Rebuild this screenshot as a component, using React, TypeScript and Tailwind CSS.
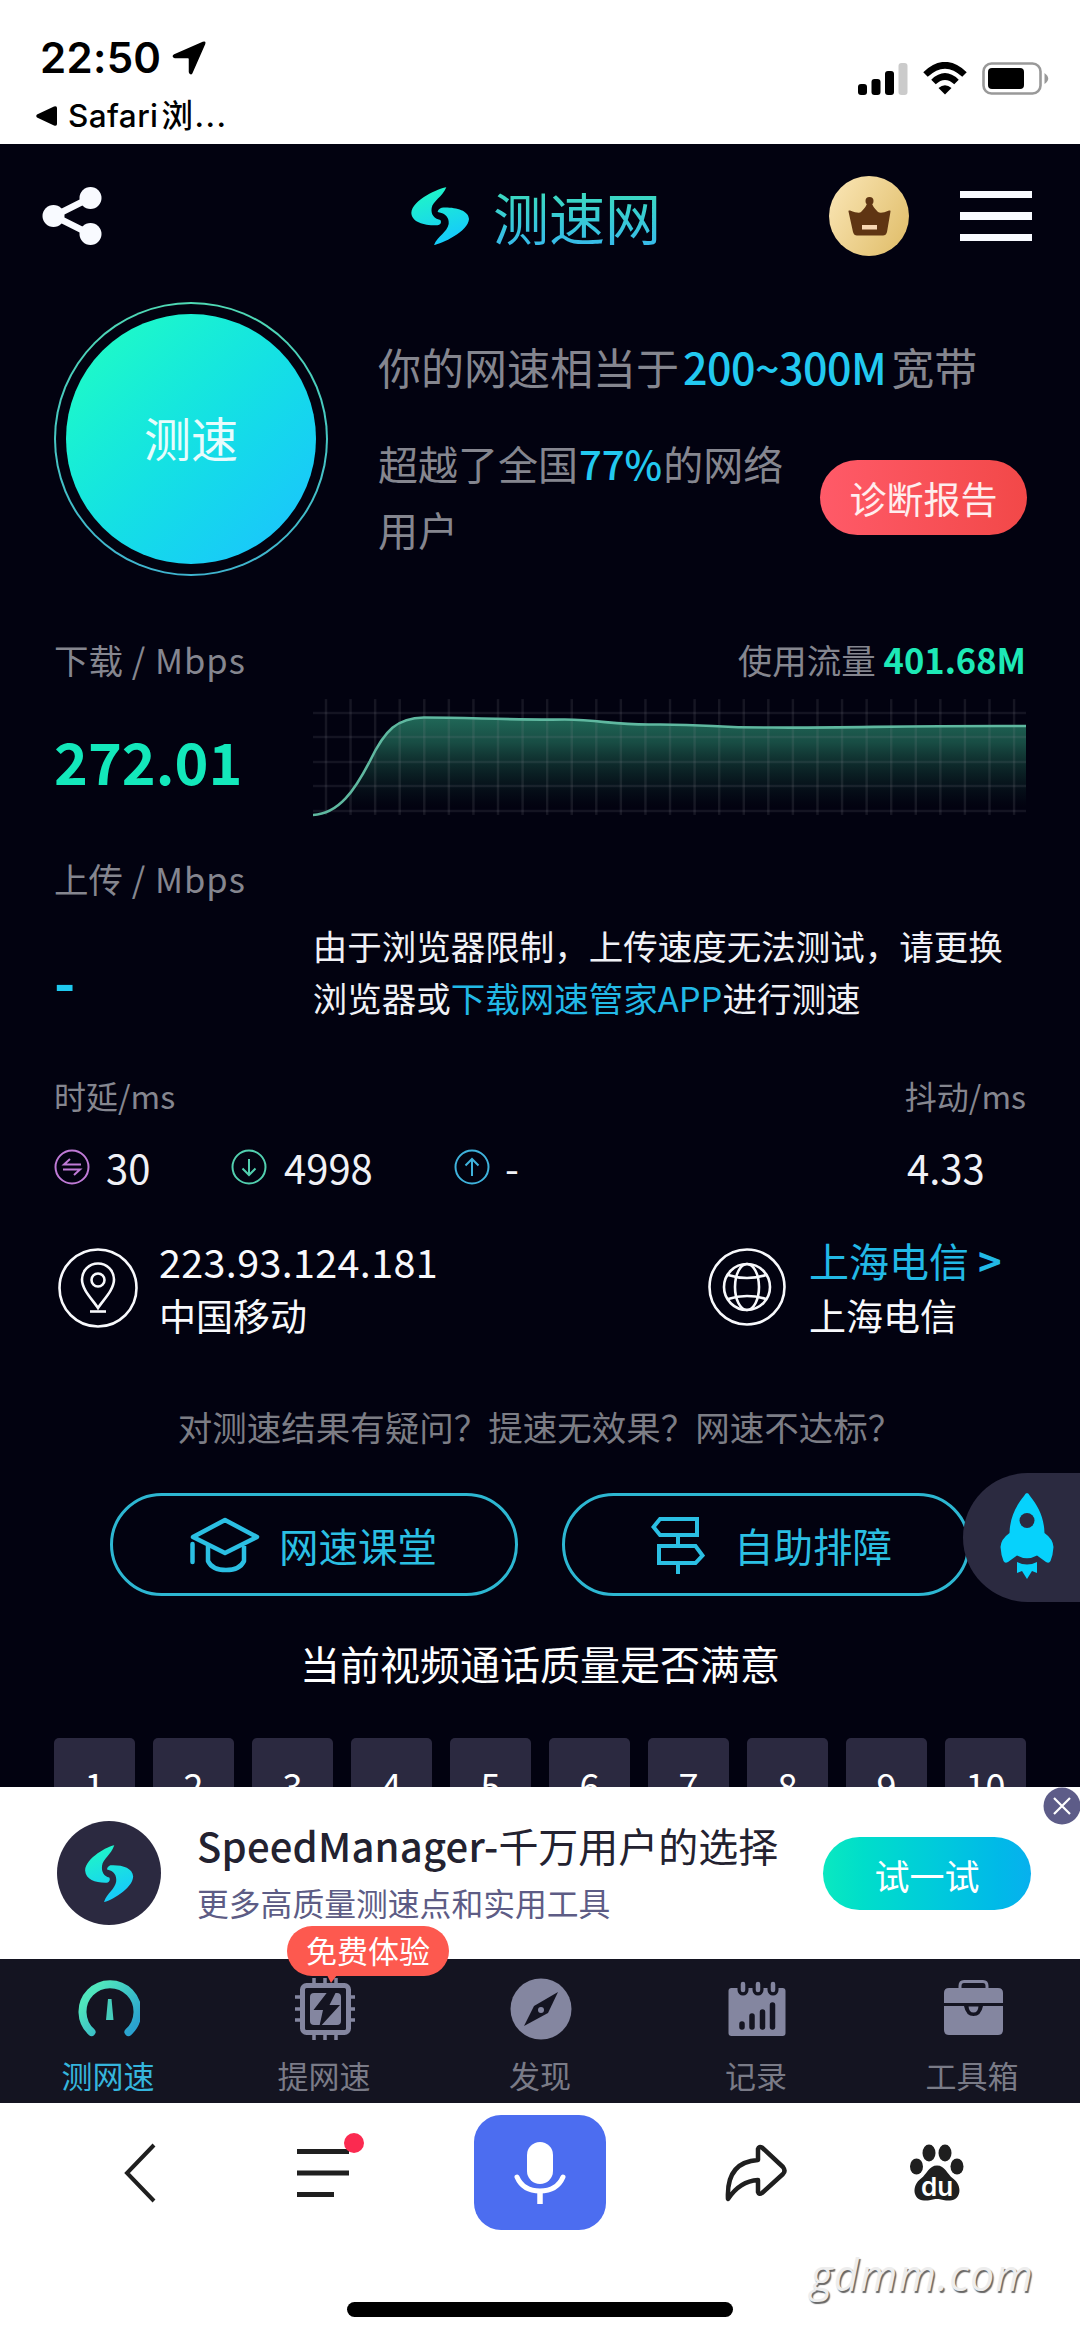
import { useId, type ReactNode } from "react";

const ratings = [1, 2, 3, 4, 5, 6, 7, 8, 9, 10];
const gridX = Array.from({ length: 29 }, (_, i) => 13 + i * 24.6);
const gridY = [18, 42, 67, 91, 116];

const curve =
  "M0 120 C26 119 42 95 57 66 C72 35 84 23 111 22.5 C160 22.5 190 25 252 24.5 C290 25 300 30 340 29.5 C400 29 400 33 460 32.5 C540 33 590 30.5 714 31";

function LogoMark({ className }: { className: string }) {
  const id = useId();
  return (
    <svg viewBox="30 64 180 180" preserveAspectRatio="none" className={className}>
      <defs>
        <linearGradient id={id} x1="0" y1="64" x2="60" y2="244" gradientUnits="userSpaceOnUse">
          <stop offset="0.2" stopColor="#1ff5c8" />
          <stop offset="1" stopColor="#16cdf8" />
        </linearGradient>
      </defs>
      <path
        fill={`url(#${id})`}
        d="M139 68C118 70 36 106 34 145C36 174 74 183 112 182C123 180 125 172 121 166C102 162 92 149 95 130C98 110 128 96 139 68Z"
      />
      <path
        fill={`url(#${id})`}
        d="M102 241C124 238 205 201 207 163C205 136 165 127 125 129C118 131 113 136 113 142C138 146 148 160 146 178C142 202 113 214 102 241Z"
      />
    </svg>
  );
}

function StatusBar() {
  return (
    <div className="flex h-[144px] shrink-0 justify-between bg-white pl-[36px] pr-[31px] text-black">
      <div className="flex flex-col pt-[37px]">
        <div className="flex items-center pl-[4px]">
          <span className="font-[Inter,sans-serif] text-[42px] font-semibold leading-[42px] tracking-[0.3px]">22:50</span>
          <svg viewBox="0 0 34 34" className="ml-[11px] h-[34px] w-[34px]">
            <path d="M31 1.5Q33.500 .5 32.500 3L20 31.500Q18.500 34 17.500 31V18Q17.500 16.500 16 16.500H3Q0 15.500 2.500 14Z" stroke="#000" strokeWidth="1.5" />
          </svg>
        </div>
        <div className="mt-[17px] flex items-center">
          <svg viewBox="0 0 22 20" className="h-[20px] w-[22px]">
            <path d="M1 8.500Q-.5 10 1 11.500L18 19.500Q21 20.500 21 18V2Q21-.5 18 .5Z" />
          </svg>
          <span className="ml-[10px] font-[Inter,'Noto_Sans_CJK_SC',sans-serif] text-[31.5px] font-medium leading-[40px] tracking-[0.4px]">
            Safari<span className="ml-[3px] tracking-[1.5px]">浏...</span>
          </span>
        </div>
      </div>
      <div className="mt-[62px] flex h-[33px] items-end gap-[15px] self-start">
        <svg viewBox="0 0 50 32" className="h-[32px] w-[50px]">
          <rect x="0" y="21" width="9" height="11" rx="3" />
          <rect x="13.500" y="16" width="9" height="16" rx="3" />
          <rect x="27" y="8" width="9" height="24" rx="3" />
          <rect x="40.500" y="0" width="9" height="32" rx="3" fill="#cbcbcb" />
        </svg>
        <svg viewBox="0 0 44 32" className="h-[33px] w-[44px]" fill="none" stroke="#000">
          <path d="M2.500 12Q22-6.500 41.500 12" strokeWidth="6.500" />
          <path d="M10.500 19.500Q22 8.500 33.500 19.500" strokeWidth="6.500" />
          <path d="M15.500 25.500Q22 20 28.500 25.500L22 32Z" fill="#000" stroke="none" />
        </svg>
        <svg viewBox="0 0 67 33" className="h-[33px] w-[67px]">
          <rect x="1.500" y="1.500" width="57" height="30" rx="8" fill="none" stroke="#999" strokeWidth="2.600" />
          <rect x="6" y="6" width="36" height="21" rx="4" />
          <path d="M62.500 11Q70 16.500 62.500 22Z" fill="#999" />
        </svg>
      </div>
    </div>
  );
}

function Header() {
  return (
    <div className="flex h-[144px] items-center pl-[42px]">
      <svg viewBox="0 0 60 60" className="h-[60px] w-[60px] shrink-0" fill="#f8faff">
        <path d="M48 12L12 30L48 48" fill="none" stroke="#f8faff" strokeWidth="6.500" />
        <circle cx="11.500" cy="30" r="11" />
        <circle cx="48.500" cy="12" r="11" />
        <circle cx="48.500" cy="48" r="11" />
      </svg>
      <LogoMark className="ml-[308px] h-[60px] w-[60px] shrink-0" />
      <span className="ml-[23px] w-[168px] shrink-0 whitespace-nowrap bg-gradient-to-b from-[#3fe0b4] to-[#38b6ee] bg-clip-text text-[56px] leading-[72px] text-transparent">
        测速网
      </span>
      <svg viewBox="0 0 80 80" className="ml-[168px] h-[80px] w-[80px] shrink-0">
        <defs>
          <linearGradient id="gold" x1="0" y1="0" x2="1" y2="0.6">
            <stop offset="0" stopColor="#fbe7b8" />
            <stop offset="1" stopColor="#e3c272" />
          </linearGradient>
        </defs>
        <circle cx="40" cy="40" r="40" fill="url(#gold)" />
        <circle cx="40.500" cy="25" r="4" fill="#5f3513" />
        <path
          d="M19.500 35.500Q19 34 21 34.500Q30 38 32 36Q38 30 38.500 26H42.500Q43 30 49 36Q52 38 60 34.500Q62 34 61.500 35.500L58 56Q57 59.500 54 59.500H28Q25 59.500 24 56Z"
          fill="#5f3513"
        />
        <rect x="33" y="49" width="15" height="4.500" fill="#f7d7b3" />
      </svg>
      <div className="ml-[51px] flex shrink-0 flex-col gap-[14px]">
        <span className="h-[7.5px] w-[72px] bg-[#f8faff]" />
        <span className="h-[7.5px] w-[72px] bg-[#f8faff]" />
        <span className="h-[7.5px] w-[72px] bg-[#f8faff]" />
      </div>
    </div>
  );
}

function Hero() {
  return (
    <div className="mt-[14px] flex h-[274px] pl-[54px]">
      <div className="h-[274px] w-[274px] shrink-0 rounded-full bg-gradient-to-b from-[#4fd9b4] to-[#3fb4cf] p-[2px]">
        <div className="flex h-full w-full items-center justify-center rounded-full bg-[#020210]">
          <button className="h-[250px] w-[250px] rounded-full bg-gradient-to-br from-[#1df7cb] from-15% to-[#1bc6fb] to-90% pb-[3px] text-[47px] text-white/90">
            测速
          </button>
        </div>
      </div>
      <div className="ml-[50px] flex flex-col whitespace-nowrap text-[#85868f]">
        <p className="mt-[34px] text-[43px] leading-[60px]">
          你的网速相当于
          <span className="pl-[4px] pr-[5px] font-medium tracking-[-0.5px] text-[#22c9f0]">200~300M</span>
          宽带
        </p>
        <div className="mt-[34px] flex">
          <p className="mr-[21px] w-[421px] whitespace-normal text-[40px] leading-[66px]">
            超越了全国<span className="px-[1px] font-medium text-[#22c9f0]">77%</span>的网络用户
          </p>
          <button className="mt-[30px] h-[75px] w-[207px] rounded-full bg-gradient-to-r from-[#ff5a68] to-[#f24848] pt-[2px] text-[37px] text-white/90">
            诊断报告
          </button>
        </div>
      </div>
    </div>
  );
}

function SpeedChart() {
  return (
    <svg viewBox="0 0 714 124" className="h-[124px] w-[714px]">
      <defs>
        <linearGradient id="area" x1="0" y1="20" x2="0" y2="112" gradientUnits="userSpaceOnUse">
          <stop offset="0" stopColor="#216b5a" />
          <stop offset="0.3" stopColor="#1c5a4d" stopOpacity="0.85" />
          <stop offset="1" stopColor="#0d2c29" stopOpacity="0" />
        </linearGradient>
      </defs>
      <path d={`${curve} V120 H0Z`} fill="url(#area)" />
      {gridX.map((x) => (
        <path key={x} d={`M${x} 4V120`} stroke="#8a8a96" strokeOpacity="0.15" strokeWidth="2.500" />
      ))}
      {gridY.map((y) => (
        <path key={y} d={`M0 ${y}H714`} stroke="#8a8a96" strokeOpacity="0.14" strokeWidth="2.500" />
      ))}
      <path d={curve} fill="none" stroke="#5fb8a0" strokeWidth="2.600" />
    </svg>
  );
}

function Speeds() {
  return (
    <div className="flex flex-col px-[54px] text-[34.5px]">
      <div className="mt-[63px] flex justify-between leading-[40px] text-[#85868f]">
        <span>
          下载<span className="tracking-[1px]"> / Mbps</span>
        </span>
        <span>
          使用流量 <b className="text-[#1de9b6]">401.68M</b>
        </span>
      </div>
      <div className="mt-[16px] flex items-center">
        <span className="mt-[5px] w-[259px] text-[57.5px] font-bold leading-[60px] text-[#13e8bb]">272.01</span>
        <SpeedChart />
      </div>
      <div className="mt-[39px] leading-[40px] text-[#85868f]">
        上传<span className="tracking-[1px]"> / Mbps</span>
      </div>
      <div className="mt-[21px] flex items-center">
        <span className="mt-4 w-[259px] text-[57.5px] font-bold leading-[60px] text-[#1fc9ef]">-</span>
        <p className="w-[714px] leading-[52px] text-[#f0f1f6]">
          由于浏览器限制，上传速度无法测试，请更换
          <br />
          浏览器或<a className="text-[#22b9e6]">下载网速管家APP</a>进行测速
        </p>
      </div>
    </div>
  );
}

function RingIcon({ color, children }: { color: string; children: ReactNode }) {
  return (
    <svg viewBox="0 0 36 36" className="h-[36px] w-[36px]" fill="none" stroke={color} strokeWidth="2">
      <circle cx="18" cy="18" r="16.500" />
      {children}
    </svg>
  );
}

function Latency() {
  return (
    <div className="flex flex-col px-[54px]">
      <div className="mt-[52px] flex justify-between text-[32px] leading-[40px] text-[#85868f]">
        <span>时延/ms</span>
        <span>抖动/ms</span>
      </div>
      <div className="mt-[32px] flex h-[40px] items-center text-[40px] leading-[40px] text-[#f0f1f6]">
        <div className="flex w-[177px] items-center gap-[16px]">
          <RingIcon color="#bf7ad6">
            <path d="M27 15.500H10L16 10M9 20.500H26L20 26" />
          </RingIcon>
          30
        </div>
        <div className="flex w-[223px] items-center gap-[17px]">
          <RingIcon color="#52cfaf">
            <path d="M18 10V26M11.500 19.500L18 26L24.500 19.500" />
          </RingIcon>
          4998
        </div>
        <div className="flex w-[453px] items-center gap-[15px]">
          <RingIcon color="#3fb2dc">
            <path d="M18 27V10M11.500 16.500L18 10L24.500 16.500" />
          </RingIcon>
          -
        </div>
        <span>4.33</span>
      </div>
    </div>
  );
}

function Network() {
  return (
    <div className="mt-[46px] flex items-center whitespace-nowrap px-[58px] text-[#f8f9fc]">
      <svg viewBox="0 0 80 80" className="h-[80px] w-[80px] shrink-0" fill="none" stroke="#f8f9fc" strokeWidth="2.600">
        <circle cx="40" cy="40" r="38.500" />
        <path d="M40 60C35 52 24 42 24 31.500A16 16 0 0 1 56 31.500C56 42 45 52 40 60Z" />
        <circle cx="40" cy="32" r="6.500" />
        <path d="M32 63.500H48" />
      </svg>
      <div className="ml-[21px] flex w-[548px] flex-col leading-[55px]">
        <span className="text-[39.5px] tracking-[0.35px]">223.93.124.181</span>
        <span className="text-[37px]">中国移动</span>
      </div>
      <svg viewBox="0 0 80 80" className="h-[80px] w-[80px] shrink-0" fill="none" stroke="#f8f9fc" strokeWidth="2.600">
        <circle cx="40" cy="39" r="37.500" />
        <circle cx="40" cy="39" r="23" />
        <ellipse cx="40" cy="39" rx="12" ry="23" />
        <path d="M21 27Q40 33 59 27M21 51Q40 45 59 51" />
      </svg>
      <div className="ml-[22px] flex flex-col leading-[55px]">
        <span className="text-[40px] text-[#22b9e6]">
          上海电信 <b>&gt;</b>
        </span>
        <span className="text-[37px]">上海电信</span>
      </div>
    </div>
  );
}

function HelpLinks() {
  return (
    <>
      <p className="mt-[63px] whitespace-nowrap text-center text-[34.5px] leading-[40px] text-[#7c7d85]">
        对测速结果有疑问？提速无效果？网速不达标？
      </p>
      <div className="mt-[47px] flex gap-[44px] pl-[110px] text-[39.5px] text-[#2bbfe3]">
        <button className="flex h-[103px] w-[408px] items-center rounded-full border-[3px] border-[#2db7d2] pl-[77px]">
          <svg viewBox="0 0 70 56" className="h-[56px] w-[70px]" fill="none" stroke="currentColor" strokeWidth="4.500" strokeLinejoin="round">
            <path d="M35 3L67 20L35 36L3 20Z" />
            <path d="M18 29V44Q22 53 36 53Q50 53 54 44V29" />
            <path d="M2.500 27V45" strokeLinecap="round" />
          </svg>
          <span className="ml-[19px]">网速课堂</span>
        </button>
        <button className="flex h-[103px] w-[408px] items-center rounded-full border-[3px] border-[#2db7d2] pl-[86px]">
          <svg viewBox="0 0 54 58" className="h-[58px] w-[54px]" fill="none" stroke="currentColor" strokeWidth="4">
            <path d="M9 3H46V19H9L2.500 11Z" />
            <path d="M8 30H44.500L51.500 39.500L44.500 47H8Z" />
            <path d="M27 19V30M27 47V58" />
          </svg>
          <span className="ml-[29px]">自助排障</span>
        </button>
      </div>
    </>
  );
}

function RocketTab() {
  return (
    <div className="absolute right-0 top-[1329px] h-[129px] w-[117px] rounded-l-full bg-[#2b2a40]">
      <svg viewBox="0 0 54 86" className="ml-[37px] mt-[20px] h-[86px] w-[54px]">
        <path
          fill="#06d2fc"
          d="M27 0Q28.500 0 30 3C38 13 44 24 44.500 40Q53 46 53.500 54Q53 62 50.500 68Q49 71 46 69L37 62.500Q27 68 17 62.500L8 69Q5 71 3.500 68Q1 62 .5 54Q1 46 9.500 40C10 24 16 13 24 3Q25.500 0 27 0Z"
        />
        <circle cx="27" cy="27.500" r="7.500" fill="#2b2a40" />
        <path fill="#06d2fc" d="M17 69Q27 74 37 69V80L32 78L27 86L22 78L17 80Z" />
      </svg>
    </div>
  );
}

function Banner() {
  return (
    <div className="relative flex h-[172px] shrink-0 items-center bg-white pl-[57px]">
      <div className="flex h-[104px] w-[104px] shrink-0 items-center justify-center rounded-full bg-[#2b2940]">
        <LogoMark className="h-[59px] w-[50px]" />
      </div>
      <div className="ml-[36px] flex w-[626px] flex-col whitespace-nowrap">
        <span className="text-[40px] leading-[58px] text-[#232230]">
          <span className="font-medium tracking-[0.2px]">SpeedManager-</span>千万用户的选择
        </span>
        <span className="text-[31.8px] leading-[56px] text-[#5d5c85]">更多高质量测速点和实用工具</span>
      </div>
      <button className="h-[73px] w-[208px] shrink-0 rounded-full bg-gradient-to-r from-[#0be8c0] to-[#08b0ee] pt-[4px] text-[35px] text-white">
        试一试
      </button>
      <svg viewBox="0 0 38 38" className="absolute -right-px top-0 h-[38px] w-[38px]">
        <circle cx="19" cy="19" r="18.500" fill="#5d5c88" />
        <path d="M11 11L27 27M27 11L11 27" stroke="#fff" strokeWidth="2.200" />
      </svg>
    </div>
  );
}

const tabs: { label: string; active?: boolean; badge?: string; icon: ReactNode }[] = [
  {
    label: "测网速",
    active: true,
    icon: (
      <>
        <defs>
          <linearGradient id="gauge" x1="0" y1="0" x2="1" y2="0.8">
            <stop offset="0.2" stopColor="#50e6bd" />
            <stop offset="1" stopColor="#2aa2cf" />
          </linearGradient>
        </defs>
        <path d="M13.500 54A27.500 27.500 0 1 1 50.500 54" fill="none" stroke="url(#gauge)" strokeWidth="8" strokeLinecap="round" />
        <path d="M30 21H33.500L35.500 42H28Z" fill="#46cdbb" />
      </>
    ),
  },
  {
    label: "提网速",
    badge: "免费体验",
    icon: (
      <>
        <g stroke="currentColor" strokeWidth="3.500">
          <path d="M20 0V8M31 0V8M42 0V8M20 54V62M31 54V62M42 54V62" />
          <path d="M1 19H9M1 31H9M1 42H9M53 19H61M53 31H61M53 42H61" />
        </g>
        <rect x="8.500" y="7.500" width="46" height="47" rx="4" fill="none" stroke="currentColor" strokeWidth="5" />
        <rect x="16" y="15" width="31" height="32" rx="4" fill="currentColor" />
        <path d="M35 12L19.500 32H29L25 50L46 27H35.500L43 12Z" fill="#141421" />
      </>
    ),
  },
  {
    label: "发现",
    icon: (
      <>
        <circle cx="31" cy="31" r="30.500" fill="currentColor" />
        <path d="M48 14L38 35L14 48L24 28Z" fill="#141421" />
        <circle cx="31" cy="32" r="3" fill="currentColor" />
      </>
    ),
  },
  {
    label: "记录",
    icon: (
      <>
        <rect x="2.500" y="10" width="57" height="48" rx="3" fill="currentColor" />
        <g stroke="#141421" strokeWidth="11" strokeLinecap="round">
          <path d="M17 8V12M32 8V12M47 8V12" />
        </g>
        <g stroke="currentColor" strokeWidth="4.500" strokeLinecap="round">
          <path d="M17 6V12M32 6V12M47 6V12" />
        </g>
        <g stroke="#141421" strokeWidth="5.500" strokeLinecap="round">
          <path d="M16 46V49M26 38V49M36.500 34V49M46.500 27V49" />
        </g>
      </>
    ),
  },
  {
    label: "工具箱",
    icon: (
      <>
        <path d="M18 12V8Q18 3.500 22 3.500H41Q45 3.500 45 8V12" fill="none" stroke="currentColor" strokeWidth="3" />
        <path d="M2 15Q2 10 7 10H56Q61 10 61 15V25H2Z" fill="currentColor" />
        <path d="M2 28H22Q24 38 31.500 38Q39 38 41 28H61V52Q61 57 56 57H7Q2 57 2 52Z" fill="currentColor" />
        <path d="M26.500 28.500H36.500Q36 34.500 31.500 34.500Q27 34.500 26.500 28.500Z" fill="currentColor" />
      </>
    ),
  },
];

function TabBar() {
  return (
    <div className="relative grid h-[144px] shrink-0 grid-cols-5 bg-[#141421]">
      {tabs.map((tab) => (
        <div
          key={tab.label}
          className={`relative flex flex-col items-center pt-[19px] ${tab.active ? "text-[#35b5dd]" : "text-[#8486a0]"}`}
        >
          <svg viewBox="0 0 62 62" className="ml-[2px] h-[62px] w-[62px]">
            {tab.icon}
          </svg>
          <span className={`mt-[17px] text-[31px] leading-[36px] ${tab.active ? "" : "text-[#7a7b87]"}`}>{tab.label}</span>
          {tab.badge && (
            <span className="absolute left-[71px] top-[-33px] flex h-[50px] w-[162px] items-center justify-center whitespace-nowrap rounded-full bg-[#fd594f] pb-[3px] text-[31px] leading-[36px] text-white">
              {tab.badge}
              <svg viewBox="0 0 10 8" className="absolute left-[40px] top-[49px] h-[8px] w-[10px]">
                <path d="M0 0H10L4 8Z" fill="#fd594f" />
              </svg>
            </span>
          )}
        </div>
      ))}
    </div>
  );
}

function BrowserBar() {
  return (
    <div className="flex h-[237px] shrink-0 flex-col bg-white">
      <div className="grid h-[139px] grid-cols-5 place-items-center text-[#1f1f1f]">
        <svg viewBox="0 0 32 60" className="mr-[-64px] h-[60px] w-[32px]" fill="none" stroke="currentColor" strokeWidth="4">
          <path d="M30 2L3 30L30 58" />
        </svg>
        <svg viewBox="0 0 70 64" className="mb-[15px] ml-[16px] h-[64px] w-[70px]">
          <path d="M0 20H52M0 41.500H52M0 63H37" stroke="currentColor" strokeWidth="4.800" className="translate-y-[-1.5px]" />
          <circle cx="57" cy="10" r="10" fill="#fb2a50" />
        </svg>
        <div className="flex h-[115px] w-[132px] items-center justify-center rounded-[27px] bg-[#4c6df0]">
          <svg viewBox="0 0 52 62" className="h-[62px] w-[52px]">
            <rect x="13" y="0" width="26" height="42" rx="13" fill="#fff" />
            <path d="M3 35Q9 49 26 49Q43 49 49 35" fill="none" stroke="#fff" strokeWidth="5" strokeLinecap="round" />
            <path d="M26 49V62" stroke="#fff" strokeWidth="5.500" />
          </svg>
        </div>
        <svg viewBox="0 0 64 58" className="h-[58px] w-[64px]" fill="none" stroke="currentColor" strokeWidth="4.500" strokeLinejoin="round">
          <path d="M34 16V5Q35 2 38 3.500L59 23Q62 27 59 30L38 49Q35 51 34 48V36Q16 37 4 55Q2 18 34 16Z" />
        </svg>
        <svg viewBox="0 0 54 57" className="mr-[70px] h-[57px] w-[54px]" fill="currentColor">
          <ellipse cx="19" cy="9" rx="6.500" ry="8.500" />
          <ellipse cx="35" cy="9" rx="6.500" ry="8.500" />
          <ellipse cx="6.500" cy="22.500" rx="6.500" ry="8" />
          <ellipse cx="47" cy="22.500" rx="6.500" ry="8" />
          <path d="M27 21.500C35 21.500 37 30 43 34.500C53 42 51 56 40 56.500C33 57 32 55 27 55C22 55 21 57 14 56.500C3 56 1 42 11 34.500C17 30 19 21.500 27 21.500Z" />
          <text x="27" y="51.500" textAnchor="middle" fill="#fff" className="font-[Inter,sans-serif] text-[26px] font-semibold">
            du
          </text>
        </svg>
      </div>
      <div className="flex h-[60px] justify-end pr-[46px]">
        <span className="mt-[3px] font-['Open_Sans',sans-serif] text-[43px] italic leading-[60px] tracking-[1.2px] text-[#ededed] [text-shadow:1.5px_1.5px_1px_#666]">
          gdmm.com
        </span>
      </div>
      <div className="mx-auto h-[15px] w-[386px] rounded-full bg-black" />
    </div>
  );
}

export default function App() {
  return (
    <div className="flex h-[2340px] w-[1080px] flex-col overflow-hidden bg-white font-['Noto_Sans_CJK_SC',sans-serif]">
      <StatusBar />
      <main className="relative h-[1643px] shrink-0 overflow-hidden bg-[#020210]">
        <Header />
        <Hero />
        <Speeds />
        <Latency />
        <Network />
        <HelpLinks />
        <h2 className="mt-[42px] text-center text-[40px] leading-[50px] text-white">当前视频通话质量是否满意</h2>
        <div className="mt-[50px] flex justify-between px-[54px]">
          {ratings.map((n) => (
            <span
              key={n}
              className="flex h-[92px] w-[81px] items-center justify-center rounded-[5px] bg-[#2b2940] text-[36px] leading-[36px] text-white"
            >
              {n}
            </span>
          ))}
        </div>
        <RocketTab />
      </main>
      <Banner />
      <TabBar />
      <BrowserBar />
    </div>
  );
}
